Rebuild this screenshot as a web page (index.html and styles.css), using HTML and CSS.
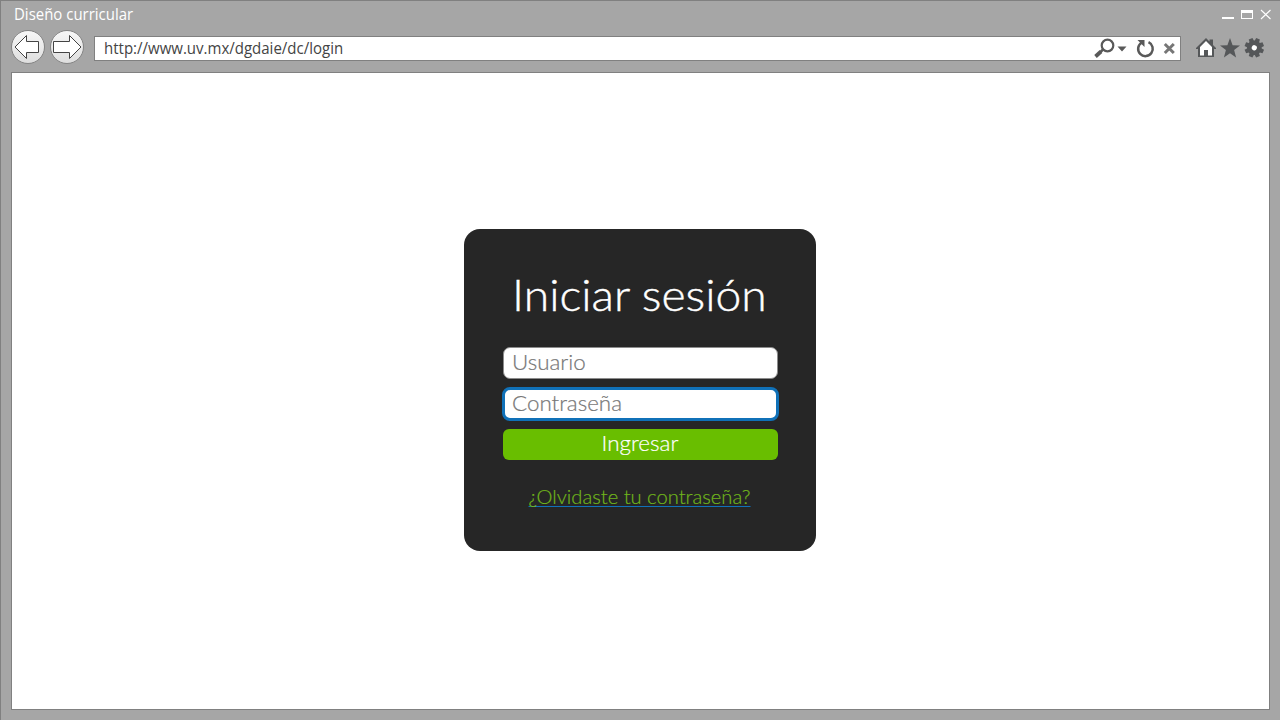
FILE: index.html
```html
<!DOCTYPE html>
<html lang="es">
<head>
<meta charset="utf-8">
<title>Diseño curricular</title>
<link rel="stylesheet" href="styles.css">
</head>
<body>
<div class="window">
  <header class="titlebar">
    <span class="window-title">Diseño curricular</span>
    <svg class="window-controls" width="52" height="14" viewBox="0 0 52 14">
      <path d="M1 10h12v2H1z" fill="#fff"/>
      <path d="M20 3h12v9H20zM21 6v5h10V6z" fill="#fff" fill-rule="evenodd"/>
      <path d="M40 3l9.500 9M49.500 3L40 12" stroke="#fff" stroke-width="1.100"/>
    </svg>
  </header>
  <nav class="toolbar">
    <div class="history">
      <button class="round" aria-label="Atrás"><svg width="32" height="32" viewBox="1 1 32 32"><path d="M4 17L15.500 5.500V11.500H27.500V22.500H15.500V28.500Z" fill="#fff" stroke="#444"/></svg></button>
      <button class="round" aria-label="Adelante"><svg width="32" height="32" viewBox="1 1 32 32"><path d="M31 17L19.500 5.500V11.500H3.500V22.500H19.500V28.500Z" fill="#fff" stroke="#444"/></svg></button>
    </div>
    <div class="address">
      <span class="url">http://www.uv.mx/dgdaie/dc/login</span>
      <svg class="address-icons" width="84" height="22" viewBox="0 0 84 22">
        <g fill="none" stroke="#595959">
          <circle cx="13.500" cy="7.500" r="5.800" stroke-width="2.200"/>
          <path d="M9 11.500L6 14.500" stroke-width="2.500"/>
          <path d="M7 13.500L1.500 18.500" stroke-width="3.800"/>
          <path d="M54.500 4.200A7.300 7.300 0 1 1 47.500 4.700" stroke-width="2.500"/>
          <path d="M70.800 6l9 9M79.800 6l-9 9" stroke="#777" stroke-width="3"/>
        </g>
        <path d="M23.500 8.500h9L28 13.500zM43.500 2h7v7z" fill="#595959"/>
      </svg>
    </div>
    <svg class="tools" width="70" height="24" viewBox="0 0 70 24">
      <path d="M1 12L11 2l3.500 3.500V3.500H18V9l3 3v1h-2v8H3v-8H1z" fill="#555759"/>
      <path d="M11 5L5 11v8.500h4v-5.500h4v5.500h4V11z" fill="#fff"/>
      <path d="M35 2l2.600 7.200 7.400.2-5.900 4.600 2 7.500L35 17.200l-6.100 4.300 2-7.500L25 9.400l7.400-.2z" fill="#555759"/>
      <g fill="#555759" transform="translate(59.300 11.800) rotate(22.500)">
        <circle r="7.300"/>
        <path id="tooth" d="M-2-9.700H2L2.400-6H-2.400z"/>
        <use href="#tooth" transform="rotate(45)"/><use href="#tooth" transform="rotate(90)"/>
        <use href="#tooth" transform="rotate(135)"/><use href="#tooth" transform="rotate(180)"/>
        <use href="#tooth" transform="rotate(225)"/><use href="#tooth" transform="rotate(270)"/>
        <use href="#tooth" transform="rotate(315)"/><circle r="2.600" fill="#fff"/>
      </g>
    </svg>
  </nav>
  <main class="page">
    <form class="login">
      <h1 class="heading"><span class="heading-text">Iniciar sesión</span></h1>
      <div class="field"><span class="label">Usuario</span></div>
      <div class="field focused"><span class="label">Contraseña</span></div>
      <button class="submit" type="button"><span class="submit-label">Ingresar</span></button>
      <a class="forgot" href="#">¿Olvidaste tu contraseña?</a>
    </form>
  </main>
</div>
</body>
</html>
```
FILE: styles.css
```css
* { box-sizing: border-box; }
body { margin: 0; font-family: "Open Sans", "Noto Sans", sans-serif; }
svg { display: block; flex: none; }
.window {
  width: 1280px; height: 720px; padding: 0 10px 10px;
  background: #a6a6a6; border: 1px solid #808080; border-width: 1px 0 0 1px;
  display: flex; flex-direction: column; overflow: hidden;
}
.titlebar { height: 27px; padding: 0 0 0 3px; display: flex; align-items: center; justify-content: space-between; }
.window-title { color: #fff; font-size: 16px; line-height: 27px; white-space: nowrap; transform: scaleX(0.935); transform-origin: left; }
.window-controls { margin: -2px -3px 0 0; }
.toolbar { height: 44px; display: flex; align-items: flex-start; }
.history { display: flex; gap: 5px; padding-top: 2px; }
.round {
  width: 34px; height: 34px; padding: 0; border: 1px solid #858585; border-radius: 50%;
  background: linear-gradient(#f7f7f7, #dedede); display: grid; place-items: center;
}
.address {
  width: 1087px; height: 25px; margin: 8px 0 0 10px; padding: 0 2px 0 9px;
  background: #fff; border: 1px solid #808080; display: flex; align-items: center; justify-content: space-between;
}
.url { font-size: 16px; line-height: 23px; color: #444; white-space: nowrap; transform: scaleX(0.938); transform-origin: left; }
.tools { margin: 8px 0 0 14px; }
.page {
  width: 1259px; height: 638px; background: #fff; border: 1px solid #808080;
  display: grid; place-items: center;
}
.login {
  width: 352px; height: 322px; padding: 38px 38px 0 39px; margin-left: -1px; margin-top: -2px;
  background: #262626; border-radius: 16px; color: #fff; font-family: Lato, sans-serif; font-weight: 300;
  display: flex; flex-direction: column;
}
.heading { margin: 0; height: 80px; font-size: 43px; font-weight: 300; line-height: 56px; text-align: center; white-space: nowrap; }
.heading-text { display: inline-block; transform: translateX(-1px) scaleX(1.075); -webkit-text-stroke: 0.4px #fff; }
.field {
  height: 32px; margin-bottom: 9px; padding-left: 8px; border: 1px solid #8c8c8c; border-radius: 7px;
  background: #fff; color: #777; font-size: 21px; line-height: 27px;
}
.label { display: inline-block; transform: scaleX(1.065); transform-origin: left; -webkit-text-stroke: 0.2px #777; }
.focused { outline: 3px solid #1071b8; outline-offset: -2px; }
.submit {
  height: 31px; padding: 0 0 1px; border: 0; border-radius: 6px; background: #69be00; color: #fff;
  font: 300 21px/28px Lato, sans-serif;
}
.submit-label { display: inline-block; transform: translate(-1px, -1px) scaleX(1.07); -webkit-text-stroke: 0.2px #fff; }
.forgot {
  align-self: center; margin-top: 25px; color: #70b51b; font-size: 19px; line-height: 24px; white-space: nowrap;
  transform: translateX(-1px) scaleX(1.062); -webkit-text-stroke: 0.2px #70b51b;
  text-decoration: underline; text-decoration-color: #1071b8; text-decoration-thickness: 1px; text-underline-offset: 2px; text-decoration-skip-ink: none;
}
```
